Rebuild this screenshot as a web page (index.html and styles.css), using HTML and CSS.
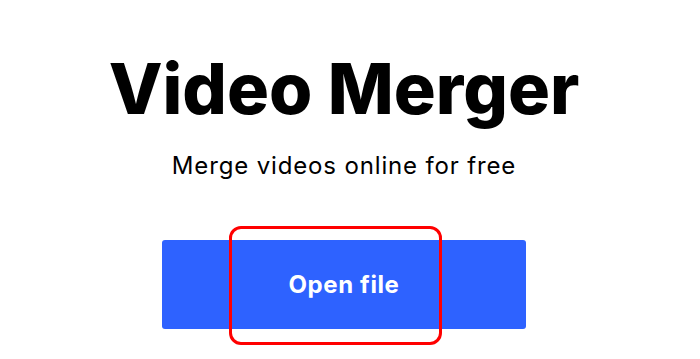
FILE: index.html
```html
<!DOCTYPE html>
<html>
<head>
<meta charset="utf-8">
<link rel="stylesheet" href="styles.css">
</head>
<body>
<main class="hero">
  <h1 class="title">Video Merger</h1>
  <p class="subtitle">Merge videos online for free</p>
  <div class="actions">
    <button class="open-btn">Open file</button>
    <div class="annotation"></div>
  </div>
</main>
</body>
</html>
```
FILE: styles.css
```css
html, body {
  margin: 0;
  padding: 0;
  background: #ffffff;
}
body {
  width: 688px;
  height: 359px;
  font-family: Inter, "Noto Sans", sans-serif;
  color: #000;
}
.hero {
  display: flex;
  flex-direction: column;
  align-items: center;
  padding-top: 41px;
}
.title {
  margin: 0;
  font-size: 70px;
  line-height: 96px;
  font-weight: 800;
  letter-spacing: 0;
}
.subtitle {
  margin: 13px 0 0;
  font-size: 24px;
  line-height: 32px;
  font-weight: 400;
  letter-spacing: 0.85px;
}
.actions {
  position: relative;
  margin-top: 58px;
}
.open-btn {
  display: block;
  width: 364px;
  height: 89px;
  padding: 0;
  border: none;
  border-radius: 3px;
  background: #2e62ff;
  color: #fff;
  font-family: Inter, "Noto Sans", sans-serif;
  font-size: 24px;
  font-weight: 700;
  letter-spacing: 0.6px;
}
.annotation {
  position: absolute;
  z-index: 1;
  box-sizing: border-box;
  left: 67px;
  top: -14px;
  width: 213px;
  height: 119px;
  border: 3px solid #ff0000;
  border-radius: 12px;
}
```
